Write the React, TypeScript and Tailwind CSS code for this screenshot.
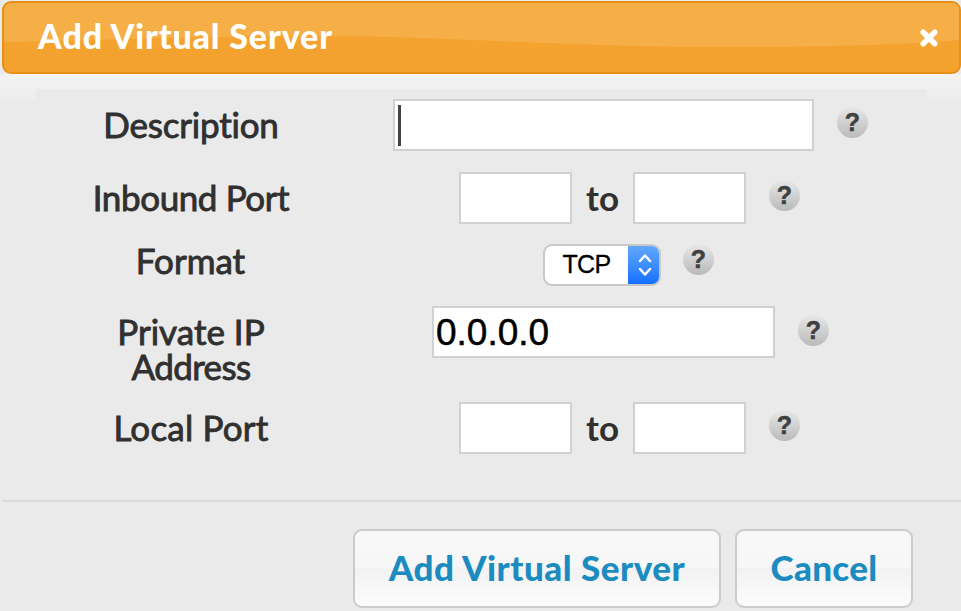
import type { ReactNode } from "react";

function Help({ className = "" }: { className?: string }) {
  return (
    <span className={`flex size-[31px] shrink-0 items-center justify-center rounded-full bg-linear-to-b from-[#e8e8e8] to-[#bababa] pb-px font-['Liberation_Sans',Arial,sans-serif] text-[25px] leading-none font-bold text-[#404040] [-webkit-text-stroke:0.5px_#404040] ${className}`}>
      ?
    </span>
  );
}

function Field({ className = "", children }: { className?: string; children?: ReactNode }) {
  return <div className={`flex shrink-0 items-center border-2 border-[#d1d1d1] bg-white ${className}`}>{children}</div>;
}

function Row({ label, className = "", children }: { label: ReactNode; className?: string; children: ReactNode }) {
  return (
    <div className={`flex items-start ${className}`}>
      <div className="flex w-[382px] shrink-0 flex-col items-center pt-[8px] text-[35px] leading-[35px] whitespace-nowrap [-webkit-text-stroke:0.9px_#303030]">
        {label}
      </div>
      {children}
    </div>
  );
}

function PortRange() {
  return (
    <>
      <Field className="ml-[77px] h-[52px] w-[113px]" />
      <span className="w-[61px] pt-[8px] text-center text-[35px] leading-[35px] font-bold">to</span>
      <Field className="h-[52px] w-[113px]" />
      <Help className="mt-[8px] ml-[23px]" />
    </>
  );
}

function Button({ className = "", children }: { className?: string; children: ReactNode }) {
  return (
    <button className={`flex h-[79px] items-center justify-center rounded-[9px] border-2 border-[#cccccc] bg-[linear-gradient(#f8f8f8_0%,#f7f7f7_48%,#f2f2f2_50%,#fbfbfb_92%)] text-[35px] leading-none font-black whitespace-nowrap text-[#1c8cc0] ${className}`}>
      {children}
    </button>
  );
}

export default function App() {
  return (
    <main className="flex h-[611px] w-[961px] flex-col overflow-hidden bg-[#eaeaea] pt-px font-[Lato,'Open_Sans',sans-serif] text-[#303030] [font-variant-ligatures:none]">
      <header className="relative ml-[2px] flex h-[73px] shrink-0 items-center justify-between overflow-hidden rounded-[9px] border-2 border-[#e78f17] bg-linear-to-b from-[#f5a531] to-[#f4a12e] pr-[21px] pb-[3px] pl-[34px]">
        <svg className="absolute inset-0 size-full" viewBox="0 0 955 69" preserveAspectRatio="none">
          <path d="M0 0H955V37C880 43 810 44 700 44C550 43 430 33 320 33C200 33 100 37 0 39Z" fill="#f6ae46" />
        </svg>
        <h1 className="relative text-[34px] leading-none font-black tracking-[0.87px] whitespace-nowrap text-white">
          Add Virtual Server
        </h1>
        <svg className="relative mt-[3px] size-[18px]" viewBox="0 0 18 18" fill="none" stroke="white" strokeWidth="5.5" strokeLinecap="round">
          <path d="M3.2 3.2L14.8 14.8M14.8 3.2L3.2 14.8" />
        </svg>
      </header>
      <section className="h-[426px] shrink-0 bg-[linear-gradient(#f3f3f3_0px,#ededed_26px,#eaeaea_27px)]">
        <div className="mx-[36px] h-full pt-[15px]">
          <div className="h-full w-[891px] bg-[#eaeaea]">
            <div className="-ml-[36px] w-[961px] pt-[10px]">
              <Row label={<span className="tracking-[-0.2px]">Description</span>} className="h-[73px]">
                <Field className="ml-[11px] h-[52px] w-[421px] pl-[3px]">
                  <i className="h-[41px] w-[3px] bg-[#444]" />
                </Field>
                <Help className="mt-[8px] ml-[23px]" />
              </Row>
              <Row label={<span className="tracking-[-0.4px]">Inbound Port</span>} className="h-[72px]"><PortRange /></Row>
              <Row label={<span className="-mt-[9px] ml-[-1px]">Format</span>} className="h-[62px]">
                <div className="ml-[161px] flex h-[42px] w-[118px] shrink-0 overflow-hidden rounded-[9px] border-2 border-[#c8c8c8] bg-white">
                  <span className="flex flex-1 items-center justify-center font-['Liberation_Sans',Arial,sans-serif] text-[25px] tracking-[-0.7px] text-black [-webkit-text-stroke:0.3px_black]">TCP</span>
                  <span className="-my-[2px] -mr-[2px] flex w-[33px] items-center justify-center bg-linear-to-b from-[#65abfa] to-[#0a6cff]">
                    <svg className="size-[24px]" viewBox="0 0 24 24" fill="none" stroke="white" strokeWidth="2.5" strokeLinecap="round" strokeLinejoin="round">
                      <path d="M7 8L12 2.5L17 8M7 16L12 21.5L17 16" />
                    </svg>
                  </span>
                </div>
                <Help className="ml-[22px]" />
              </Row>
              <Row label={<><span>Private IP</span><span className="tracking-[-0.6px]">Address</span></>} className="h-[96px]">
                <Field className="ml-[50px] h-[52px] w-[343px] pl-[2px] font-['Liberation_Sans',Arial,sans-serif] text-[37px] leading-none text-black [-webkit-text-stroke:0.5px_black]">0.0.0.0</Field>
                <Help className="mt-[9px] ml-[23px]" />
              </Row>
              <Row label={<span className="tracking-[0.2px]">Local Port</span>}><PortRange /></Row>
            </div>
          </div>
        </div>
      </section>
      <footer className="ml-[2px] flex h-[110px] shrink-0 gap-[14px] border-t-2 border-[#dadada] pt-[27px] pl-[351px]">
        <Button className="w-[368px] pb-[2px] tracking-[0.5px]">Add Virtual Server</Button>
        <Button className="w-[178px] pb-[2px] tracking-[0.3px]">Cancel</Button>
      </footer>
    </main>
  );
}
